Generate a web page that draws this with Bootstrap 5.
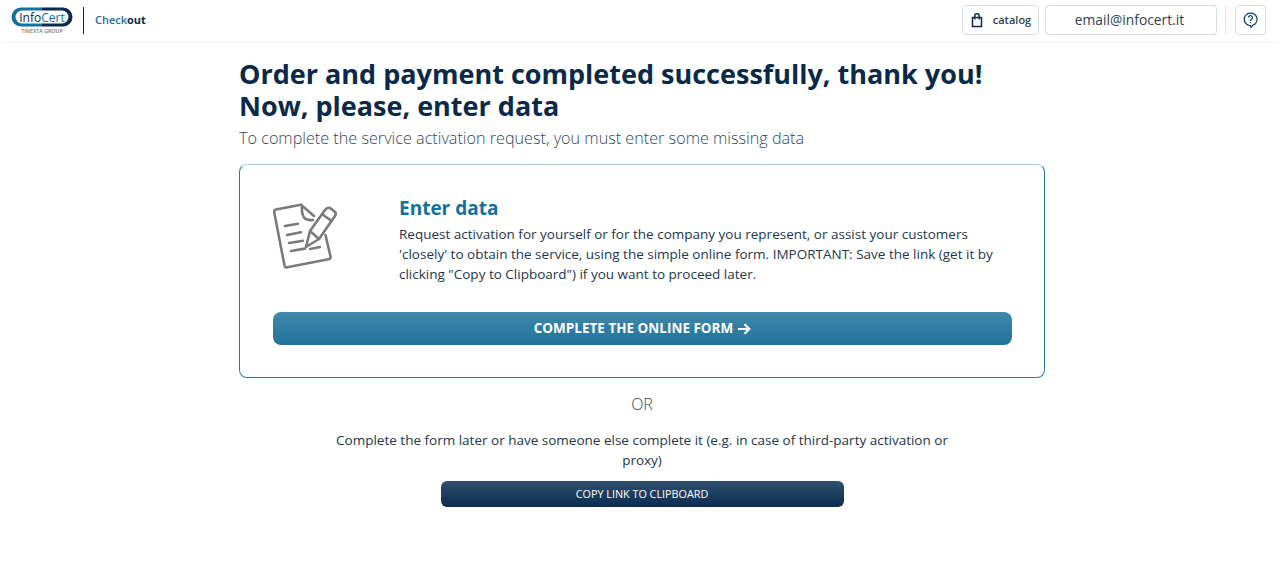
<!DOCTYPE html>
<html lang="en">
<head>
    <meta charset="UTF-8">
    <meta name="viewport" content="width=device-width, initial-scale=1.0">
    <title>Checkout</title>
    <link href="https://cdn.jsdelivr.net/npm/bootstrap@5.3.0/dist/css/bootstrap.min.css" rel="stylesheet">
    <style>
        body {
            font-family: "Open Sans", sans-serif;
            color: #0b2a4a;
            background: #fff;
        }
        .top-bar {
            height: 41px;
            padding: 5px 14px 0 11px;
            box-shadow: 0 1px 3px rgba(0, 0, 0, .05);
        }
        .logo-box { width: 62px; height: 30px; }
        .logo-sep { width: 1px; height: 27px; background: #0b2a4a; margin: 0 11px 0 10px; }
        .app-name { font-size: 11px; font-weight: 600; color: #1f6f97; }
        .app-name b { color: #0b2a4a; font-weight: 700; }
        .tool-box {
            height: 30px;
            border: 1px solid #d5dde5;
            border-radius: 4px;
            background: #fff;
            color: #333f4d;
        }
        .tool-catalog { width: 77px; font-size: 11px; font-weight: 600; gap: 9px; margin-right: 6px; }
        .tool-mail { width: 172px; font-size: 13.8px; padding-right: 3px; }
        .tool-sep { width: 1px; height: 30px; background: #dfe4e8; margin: 0 9px 0 8px; }
        .tool-help { width: 31px; }
        .page-wrap { width: 806px; margin-left: 239px; }
        .main-title { font-size: 27px; line-height: 32px; font-weight: 700; color: #0b2a4a; margin: 0; padding-top: 17px; }
        .sub-title { font-size: 16.2px; line-height: 22px; font-weight: 300; color: #33475b; margin: 5px 0 15px; }
        .data-box {
            height: 214px;
            border: 1px solid #2a7aa0;
            border-top-color: #a9cfdf;
            border-radius: 8px;
            padding: 38px 32px 32px 33px;
        }
        .data-icon { width: 126px; }
        .data-title { font-size: 19px; line-height: 24px; font-weight: 700; color: #14719b; margin: -7px 0 4px; }
        .data-text { font-size: 13.5px; line-height: 20px; color: #22374d; margin: 0; }
        .btn-form {
            height: 33px;
            margin-top: 28px;
            border: 0;
            border-radius: 8px;
            background: linear-gradient(#4289aa, #1f729b);
            color: #fff;
            font-size: 13.5px;
            font-weight: 700;
        }
        .or-text { font-size: 16px; line-height: 22px; font-weight: 300; color: #33475b; margin: 15px 0 15px; }
        .later-text { font-size: 13.5px; line-height: 20px; color: #22374d; width: 630px; margin: 0 auto 10px; }
        .btn-copy {
            width: 403px;
            height: 26px;
            border: 0;
            border-radius: 6px;
            background: linear-gradient(#2f4f6f, #0c2c4f);
            color: #fff;
            font-size: 10.8px;
            font-weight: 400;
        }
    </style>
</head>
<body>
    <header class="top-bar d-flex align-items-start justify-content-between bg-white">
        <div class="d-flex align-items-center">
            <svg class="logo-box" viewBox="0 0 62 30">
                <path d="M31 2.500H10a9.500 9.500 0 0 0 0 19H31z" fill="#14719b"/>
                <path d="M31 2.500H52a9.500 9.500 0 0 1 0 19H31z" fill="#0b2a4a"/>
                <rect x="4.500" y="5.500" width="53" height="13" rx="6.500" fill="#fff"/>
                <text x="31" y="16.500" text-anchor="middle" font-family="Open Sans, sans-serif" font-size="12" fill="#0b2a4a">Info<tspan fill="#14719b">Cert</tspan></text>
                <text x="31" y="28" text-anchor="middle" font-family="Open Sans, sans-serif" font-size="5.300" font-weight="600" fill="#777">TINEXTA GROUP</text>
            </svg>
            <div class="logo-sep"></div>
            <div class="app-name">Check<b>out</b></div>
        </div>
        <div class="d-flex align-items-center">
            <div class="tool-box tool-catalog d-flex align-items-center justify-content-center">
                <svg width="14" height="15" viewBox="0 0 14 15" fill="none" stroke="#0b2a4a" stroke-width="1.500">
                    <path d="M2.500 4.500h9v9h-9z"/><path d="M4.800 6.500V3a2.200 2.200 0 0 1 4.400 0v3.500"/>
                </svg>
                <span>catalog</span>
            </div>
            <div class="tool-box tool-mail d-flex align-items-center justify-content-center">email@infocert.it</div>
            <div class="tool-sep"></div>
            <div class="tool-box tool-help d-flex align-items-center justify-content-center">
                <svg width="15" height="16" viewBox="0 0 15 16" fill="none" stroke="#1d4666" stroke-width="1.300">
                    <path d="M7.500 1a6.300 6.300 0 1 0 0 12.600l.6 1.900 1.800-2.300A6.300 6.300 0 0 0 7.500 1z"/>
                    <path d="M5.500 5.600a2 2 0 1 1 3 1.800c-.7.400-1 .8-1 1.600"/><path d="M7.500 10v1.100"/>
                </svg>
            </div>
        </div>
    </header>

    <main class="page-wrap">
        <h1 class="main-title">Order and payment completed successfully, thank you!<br>Now, please, enter data</h1>
        <p class="sub-title">To complete the service activation request, you must enter some missing data</p>

        <section class="data-box d-flex flex-column">
            <div class="d-flex">
                <div class="data-icon flex-shrink-0">
                    <svg class="d-block" width="66" height="66" viewBox="0 0 66 66" fill="none" stroke="#7b7b7b" stroke-width="2.600" stroke-linejoin="round" stroke-linecap="round">
                        <path d="M28 1.800L3 6.500Q.8 7 1.200 9.200L11.500 62.500Q12 64.800 14.200 64.300L55.500 56.300Q58 55.800 57.500 53.500L52.500 32"/>
                        <path d="M28 1.800L41 13"/>
                        <path d="M29 3c-.5 5 .5 9 2 11.500 2 2.500 5 3 9 2.500"/>
                        <path d="M12 23l13-2.200M14 32l14-2.800M16 40l14-2.200M18 48l14-2.400M37 46l10-2"/>
                        <path d="M33 44L37 28 52 7Q54 4 57 5L61 8Q64 10 62 13L46 36Z"/>
                        <path d="M49 11l9.500 7M37 28l9 8"/>
                    </svg>
                </div>
                <div>
                    <h2 class="data-title">Enter data</h2>
                    <p class="data-text">Request activation for yourself or for the company you represent, or assist your customers 'closely' to obtain the service, using the simple online form. IMPORTANT: Save the link (get it by clicking "Copy to Clipboard") if you want to proceed later.</p>
                </div>
            </div>
            <button class="btn-form d-flex align-items-center justify-content-center w-100 gap-1" type="button">
                COMPLETE THE ONLINE FORM
                <svg width="14" height="12" viewBox="0 0 14 12" fill="none" stroke="#fff" stroke-width="2.200">
                    <path d="M1 6h11M7.500 1.200L12.300 6l-4.800 4.800"/>
                </svg>
            </button>
        </section>

        <div class="text-center">
            <div class="or-text">OR</div>
            <p class="later-text">Complete the form later or have someone else complete it (e.g. in case of third-party activation or proxy)</p>
            <button class="btn-copy" type="button">COPY LINK TO CLIPBOARD</button>
        </div>
    </main>
    <script src="https://cdn.jsdelivr.net/npm/bootstrap@5.3.0/dist/js/bootstrap.bundle.min.js"></script>
</body>
</html>
